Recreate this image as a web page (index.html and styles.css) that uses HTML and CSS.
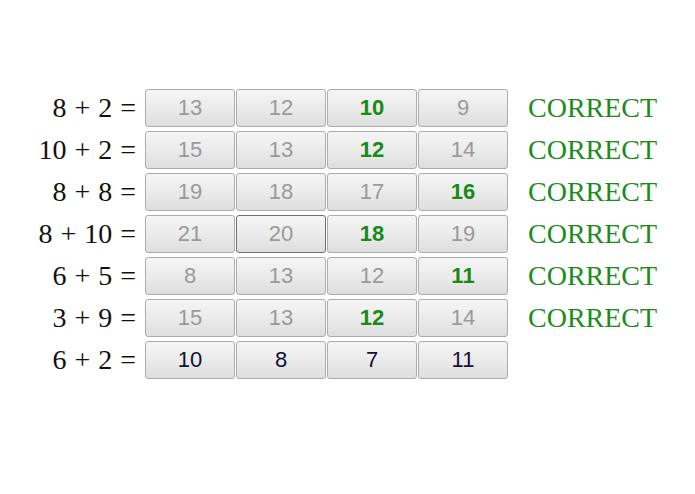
FILE: index.html
```html
<!DOCTYPE html>
<html>
<head>
<meta charset="utf-8">
<link rel="stylesheet" href="styles.css">
</head>
<body>
<div class="quiz">
  <div class="row">
    <div class="q">8 + 2 =</div>
    <div class="opts"><button class="b dis">13</button><button class="b dis">12</button><button class="b ok">10</button><button class="b dis">9</button></div>
    <div class="res">CORRECT</div>
  </div>
  <div class="row">
    <div class="q">10 + 2 =</div>
    <div class="opts"><button class="b dis">15</button><button class="b dis">13</button><button class="b ok">12</button><button class="b dis">14</button></div>
    <div class="res">CORRECT</div>
  </div>
  <div class="row">
    <div class="q">8 + 8 =</div>
    <div class="opts"><button class="b dis">19</button><button class="b dis">18</button><button class="b dis">17</button><button class="b ok">16</button></div>
    <div class="res">CORRECT</div>
  </div>
  <div class="row">
    <div class="q">8 + 10 =</div>
    <div class="opts"><button class="b dis">21</button><button class="b dis focus">20</button><button class="b ok">18</button><button class="b dis">19</button></div>
    <div class="res">CORRECT</div>
  </div>
  <div class="row">
    <div class="q">6 + 5 =</div>
    <div class="opts"><button class="b dis">8</button><button class="b dis">13</button><button class="b dis">12</button><button class="b ok">11</button></div>
    <div class="res">CORRECT</div>
  </div>
  <div class="row">
    <div class="q">3 + 9 =</div>
    <div class="opts"><button class="b dis">15</button><button class="b dis">13</button><button class="b ok">12</button><button class="b dis">14</button></div>
    <div class="res">CORRECT</div>
  </div>
  <div class="row">
    <div class="q">6 + 2 =</div>
    <div class="opts"><button class="b">10</button><button class="b">8</button><button class="b">7</button><button class="b">11</button></div>
    <div class="res"></div>
  </div>
</div>
</body>
</html>
```

FILE: styles.css
```css
html, body {
  margin: 0;
  padding: 0;
  background: #ffffff;
}
.quiz {
  padding-top: 89px;
  display: flex;
  flex-direction: column;
  gap: 4px;
}
.row {
  display: flex;
  align-items: center;
  height: 38px;
}
.q {
  width: 136px;
  text-align: right;
  font-family: "Liberation Serif", "Times New Roman", serif;
  font-size: 28px;
  word-spacing: 1px;
  color: #111;
  margin-right: 9px;
  white-space: nowrap;
}
.opts {
  display: flex;
  gap: 1px;
}
.b {
  box-sizing: border-box;
  width: 90px;
  height: 38px;
  margin: 0;
  padding: 0;
  border: 1px solid #acacac;
  border-radius: 3px;
  background: linear-gradient(#f5f5f5, #ebebeb 50%, #dedede);
  font-family: "Liberation Sans", Arial, sans-serif;
  font-size: 22px;
  color: #111133;
}
.b.dis {
  color: #9a9a9a;
}
.b.ok {
  color: #188a18;
  font-weight: bold;
}
.b.focus {
  border-color: #707070;
}
.res {
  margin-left: 20px;
  font-family: "Liberation Serif", "Times New Roman", serif;
  font-size: 28px;
  color: #1d8c1d;
  white-space: nowrap;
}
```
